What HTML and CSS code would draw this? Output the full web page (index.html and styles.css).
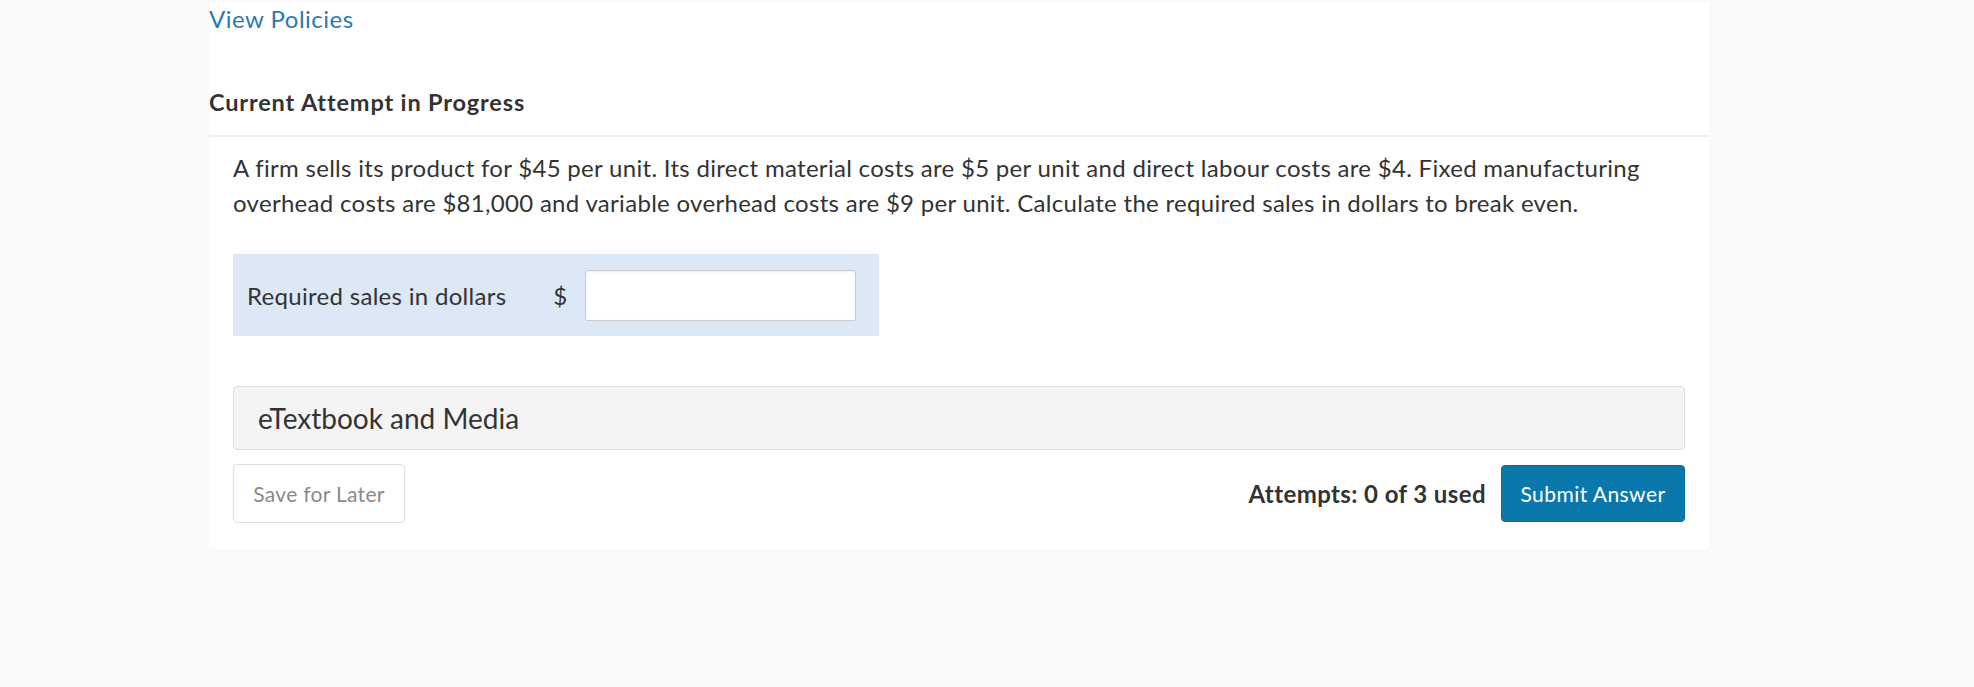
FILE: index.html
```html
<!DOCTYPE html>
<html lang="en">
<head>
    <meta charset="UTF-8">
    <meta name="viewport" content="width=device-width, initial-scale=1.0">
    <title>Current Attempt in Progress</title>
    <link rel="stylesheet" href="styles.css">
</head>
<body>

<div class="panel">
    <a class="policies-link" href="#">View Policies</a>

    <h2 class="attempt-title">Current Attempt in Progress</h2>

    <div class="question">
        <p class="question-text">A firm sells its product for $45 per unit. Its direct material costs are $5 per unit and direct labour costs are $4. Fixed manufacturing overhead costs are $81,000 and variable overhead costs are $9 per unit. Calculate the required sales in dollars to break even.</p>

        <div class="answer-row">
            <label class="answer-label" for="sales">Required sales in dollars</label>
            <span class="currency">$</span>
            <input class="answer-input" id="sales" type="text">
        </div>

        <div class="media-bar">eTextbook and Media</div>

        <div class="actions">
            <button class="button-save">Save for Later</button>
            <div class="submit-group">
                <span class="attempts">Attempts: 0 of 3 used</span>
                <button class="button-submit">Submit Answer</button>
            </div>
        </div>
    </div>
</div>

</body>
</html>
```

FILE: styles.css
```css
body {
    background-color: #f9f9f9;
    font-family: Lato, 'Open Sans', sans-serif;
    color: #333;
    margin: 0;
}

.panel {
    background-color: #fff;
    width: 1500px;
    margin: 2px 0 0 209px;
    padding-bottom: 26px;
}

.policies-link {
    display: block;
    color: #2a7aaf;
    text-decoration: none;
    font-size: 24px;
    letter-spacing: 0.5px;
    line-height: 34px;
}

.attempt-title {
    font-size: 23.5px;
    font-weight: 700;
    letter-spacing: 0.85px;
    line-height: 33px;
    margin: 50px 0 0;
    padding-bottom: 16px;
    border-bottom: 2px solid #efefef;
}

.question {
    padding: 0 24px;
}

.question-text {
    font-size: 24px;
    letter-spacing: 0.3px;
    line-height: 35px;
    margin: 13px 0 34px;
}

.answer-row {
    display: flex;
    align-items: center;
    width: 646px;
    box-sizing: border-box;
    background-color: #dde8f7;
    padding: 16px 22px 15px 14px;
    font-size: 24px;
    letter-spacing: 0.3px;
    white-space: nowrap;
}

.answer-label {
    flex-shrink: 0;
    margin-right: 47px;
}

.currency {
    margin-right: 17px;
}

.answer-input {
    width: 271px;
    height: 51px;
    flex-shrink: 0;
    box-sizing: border-box;
    border: 1px solid #ccc;
    border-radius: 2px;
    background: #fff;
    box-shadow: inset 0 1px 2px rgba(0, 0, 0, 0.08);
}

.media-bar {
    margin-top: 50px;
    height: 64px;
    box-sizing: border-box;
    display: flex;
    align-items: center;
    padding-left: 24px;
    font-size: 28px;
    background-color: #f4f4f4;
    border: 1px solid #ddd;
    border-radius: 4px;
}

.actions {
    display: flex;
    justify-content: space-between;
    align-items: center;
    margin-top: 14px;
}

.submit-group {
    display: flex;
    align-items: center;
    gap: 15px;
}

.attempts {
    font-size: 24px;
    font-weight: 700;
    letter-spacing: 0.4px;
}

button {
    font-family: Lato, 'Open Sans', sans-serif;
    font-size: 21px;
    border-radius: 4px;
    cursor: pointer;
}

.button-save {
    width: 172px;
    height: 59px;
    background-color: #fff;
    color: #8a8a8a;
    border: 1px solid #ddd;
    letter-spacing: 0.3px;
}

.button-submit {
    width: 184px;
    height: 57px;
    background-color: #0a78ab;
    color: #fff;
    border: 1px solid #086c9a;
    letter-spacing: 0.45px;
}
```
